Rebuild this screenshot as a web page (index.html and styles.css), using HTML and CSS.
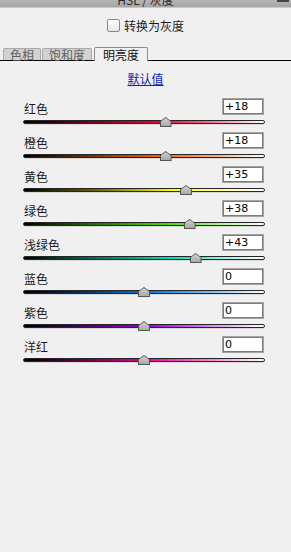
FILE: index.html
```html
<!DOCTYPE html>
<html lang="zh-CN">
  <head>
    <meta charset="UTF-8" />
    <title>HSL / 灰度</title>
    <link rel="stylesheet" href="styles.css" />
  </head>
  <body>
    <!-- TITLE BAR ============ -->
    <div class="titlebar">
      <span class="title">HSL / 灰度</span>
      <span class="menu"></span>
    </div>

    <!-- CONVERT ============ -->
    <label class="convert">
      <span class="check"></span>
      <span>转换为灰度</span>
    </label>

    <!-- TABS ============ -->
    <div class="tabs">
      <span class="tab">色相</span>
      <span class="tab">饱和度</span>
      <span class="tab active">明亮度</span>
    </div>

    <div class="defaults"><a href="#">默认值</a></div>

    <!-- SLIDERS ============ -->
    <div class="sliders">
      <div class="row">
        <div class="head"><span class="label">红色</span><span class="value">+18</span></div>
        <div class="track red"><span class="thumb" style="left: 59%"></span></div>
      </div>
      <div class="row">
        <div class="head"><span class="label">橙色</span><span class="value">+18</span></div>
        <div class="track orange"><span class="thumb" style="left: 59%"></span></div>
      </div>
      <div class="row">
        <div class="head"><span class="label">黄色</span><span class="value">+35</span></div>
        <div class="track yellow"><span class="thumb" style="left: 67.5%"></span></div>
      </div>
      <div class="row">
        <div class="head"><span class="label">绿色</span><span class="value">+38</span></div>
        <div class="track green"><span class="thumb" style="left: 69%"></span></div>
      </div>
      <div class="row">
        <div class="head"><span class="label">浅绿色</span><span class="value">+43</span></div>
        <div class="track aqua"><span class="thumb" style="left: 71.5%"></span></div>
      </div>
      <div class="row">
        <div class="head"><span class="label">蓝色</span><span class="value">0</span></div>
        <div class="track blue"><span class="thumb" style="left: 50%"></span></div>
      </div>
      <div class="row">
        <div class="head"><span class="label">紫色</span><span class="value">0</span></div>
        <div class="track purple"><span class="thumb" style="left: 50%"></span></div>
      </div>
      <div class="row">
        <div class="head"><span class="label">洋红</span><span class="value">0</span></div>
        <div class="track magenta"><span class="thumb" style="left: 50%"></span></div>
      </div>
    </div>
  </body>
</html>
```

FILE: styles.css
```css
/* GLOBAL ============ */

* {
  margin: 0;
  padding: 0;
  box-sizing: border-box;
}

body {
  width: 291px;
  min-height: 552px;
  background: #f0f0f0;
  color: #1a1a1a;
  font-family: "Noto Sans CJK SC", "DejaVu Sans", sans-serif;
  font-size: 12px;
}

/* TITLE BAR ============ */

.titlebar {
  position: relative;
  height: 8px;
  overflow: hidden;
  background: linear-gradient(#b4b4b4, #a6a6a6);
  border-bottom: 1px solid #c8c8c8;
  display: flex;
  justify-content: center;
}

.title {
  font-size: 12px;
  line-height: 14px;
  margin-top: -7px;
  color: #2a2a2a;
}

.menu {
  position: absolute;
  right: 2px;
  top: 0;
  width: 12px;
  height: 2px;
  border-top: 1px solid #444;
  border-bottom: 1px solid #444;
}

/* CONVERT ============ */

.convert {
  display: flex;
  justify-content: center;
  align-items: center;
  gap: 4px;
  margin-top: 11px;
  height: 13px;
  line-height: 13px;
}

.check {
  width: 13px;
  height: 13px;
  border: 1px solid #8a8a8a;
  border-radius: 2px;
  background: linear-gradient(#ffffff, #e6e6e6);
}

/* TABS ============ */

.tabs {
  display: flex;
  align-items: flex-end;
  margin-top: 15px;
  height: 14px;
  padding-left: 3px;
  border-bottom: 1px solid #000;
}

.tab {
  height: 12px;
  line-height: 12px;
  padding: 0 6px;
  margin-right: 1px;
  background: #d2d2d2;
  border: 1px solid #a8a8a8;
  border-bottom: none;
  border-radius: 2px 2px 0 0;
  color: #606060;
  font-size: 12px;
}

.tab.active {
  height: 14px;
  line-height: 13px;
  margin-bottom: -1px;
  padding: 0 8px;
  margin-left: 1px;
  background: #f0f0f0;
  border-color: #8c8c8c;
  color: #111;
}

/* DEFAULTS ============ */

.defaults {
  text-align: center;
  margin-top: 11px;
  line-height: 14px;
  margin-bottom: 12px;
}

.defaults a {
  color: #1020c0;
  text-decoration: underline;
}

/* SLIDERS ============ */

.sliders {
  padding: 0 26px 0 23px;
}

.row {
  margin-bottom: 8px;
}

.head {
  display: flex;
  justify-content: space-between;
  align-items: center;
  height: 17px;
}

.label {
  padding-left: 1px;
  padding-top: 3px;
}

.value {
  width: 42px;
  height: 17px;
  margin-right: 1px;
  padding-left: 2px;
  background: #fff;
  border: 1px solid #a4a4a4;
  box-shadow: inset 0 0 0 1px #7c7c7c;
  font-family: "DejaVu Sans", sans-serif;
  font-size: 11px;
  line-height: 15px;
  color: #000;
}

.track {
  position: relative;
  margin-top: 5px;
  height: 4px;
  border: 1px solid #262626;
  border-radius: 2px;
  box-shadow: 0 1px 0 #d8d8d8;
}

/* thumb: dark outline shape with a lighter inner shape */
.thumb {
  position: absolute;
  top: -4px;
  margin-left: -6px;
  width: 12px;
  height: 10px;
  background: #555;
  clip-path: polygon(50% 0, 100% 45%, 100% 100%, 0 100%, 0 45%);
}

.thumb::before {
  content: "";
  position: absolute;
  inset: 1px;
  background: linear-gradient(#cfcfcf, #a9a9a9);
  clip-path: polygon(50% 0, 100% 45%, 100% 100%, 0 100%, 0 45%);
}

.red {
  background: linear-gradient(to right, #000, #6a0016 25%, #e8003a 55%, #f37d97 80%, #fff);
}

.orange {
  background: linear-gradient(to right, #000, #6a2a00 25%, #f06000 55%, #f8ae80 80%, #fff);
}

.yellow {
  background: linear-gradient(to right, #000, #6a6200 30%, #ffff00 62%, #ffff90 82%, #fff);
}

.green {
  background: linear-gradient(to right, #000, #1f6a00 28%, #50e000 62%, #b4f090 82%, #fff);
}

.aqua {
  background: linear-gradient(to right, #000, #006a58 28%, #00e0c4 62%, #90f0e4 82%, #fff);
}

.blue {
  background: linear-gradient(to right, #000, #002e60 25%, #0a78d8 52%, #8ac0f0 80%, #fff);
}

.purple {
  background: linear-gradient(to right, #000, #480068 25%, #a000d8 52%, #d896f0 80%, #fff);
}

.magenta {
  background: linear-gradient(to right, #000, #680044 25%, #f000a0 52%, #f790d0 80%, #fff);
}
```
